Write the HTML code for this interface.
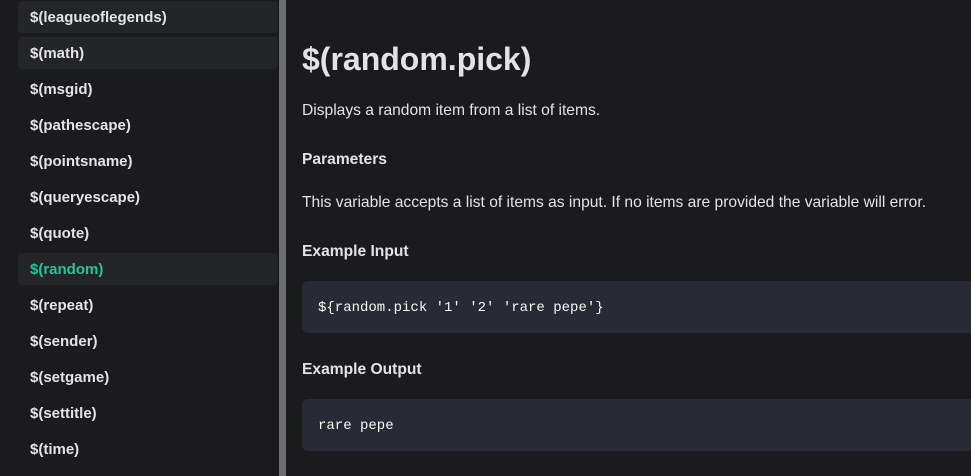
<!DOCTYPE html><html><head><style>
body{margin:0;width:971px;height:476px;overflow:hidden;background:#1b1b1d;font-family:"Liberation Sans",sans-serif;color:#e3e3e3}
.side{position:absolute;left:0;top:0;width:279px;height:476px;background:#1b1b1d}
.bar{position:absolute;left:279px;top:0;width:7px;height:476px;background:#6b6b6b}
.it{position:absolute;left:18px;width:260px;height:32px;line-height:34px;padding-left:12px;box-sizing:border-box;font-weight:bold;font-size:15px;color:#e3e3e3;border-radius:4px}
.bg{background:#242526}
.act{color:#25c2a0;background:#242526}
.main{position:absolute;left:302px;top:0;right:0}
h1{position:absolute;top:39px;margin:0;font-size:32px;line-height:40px;font-weight:bold;color:#e3e3e3}
.t{position:absolute;font-size:15.6px;white-space:nowrap}
.b{font-weight:bold}
.code{position:absolute;left:0;width:700px;height:52px;background:#282a36;border-radius:6px;font-family:"Liberation Mono",monospace;font-size:14px;line-height:54px;padding-left:16px;box-sizing:border-box;color:#f8f8f2}
</style></head><body>
<div class="side">
<div class="it bg" style="top:1px">$(leagueoflegends)</div>
<div class="it bg" style="top:37px">$(math)</div>
<div class="it" style="top:73px">$(msgid)</div>
<div class="it" style="top:109px">$(pathescape)</div>
<div class="it" style="top:145px">$(pointsname)</div>
<div class="it" style="top:181px">$(queryescape)</div>
<div class="it" style="top:217px">$(quote)</div>
<div class="it act" style="top:253px">$(random)</div>
<div class="it" style="top:289px">$(repeat)</div>
<div class="it" style="top:325px">$(sender)</div>
<div class="it" style="top:361px">$(setgame)</div>
<div class="it" style="top:397px">$(settitle)</div>
<div class="it" style="top:433px">$(time)</div>
</div>
<div class="bar"></div>
<div class="main">
<h1>$(random.pick)</h1>
<div class="t" style="top:102px">Displays a random item from a list of items.</div>
<div class="t b" style="top:151px">Parameters</div>
<div class="t" style="top:194px">This variable accepts a list of items as input. If no items are provided the variable will error.</div>
<div class="t b" style="top:243px">Example Input</div>
<div class="code" style="top:281px">${random.pick '1' '2' 'rare pepe'}</div>
<div class="t b" style="top:361px">Example Output</div>
<div class="code" style="top:399px">rare pepe</div>
</div>
</body></html>
